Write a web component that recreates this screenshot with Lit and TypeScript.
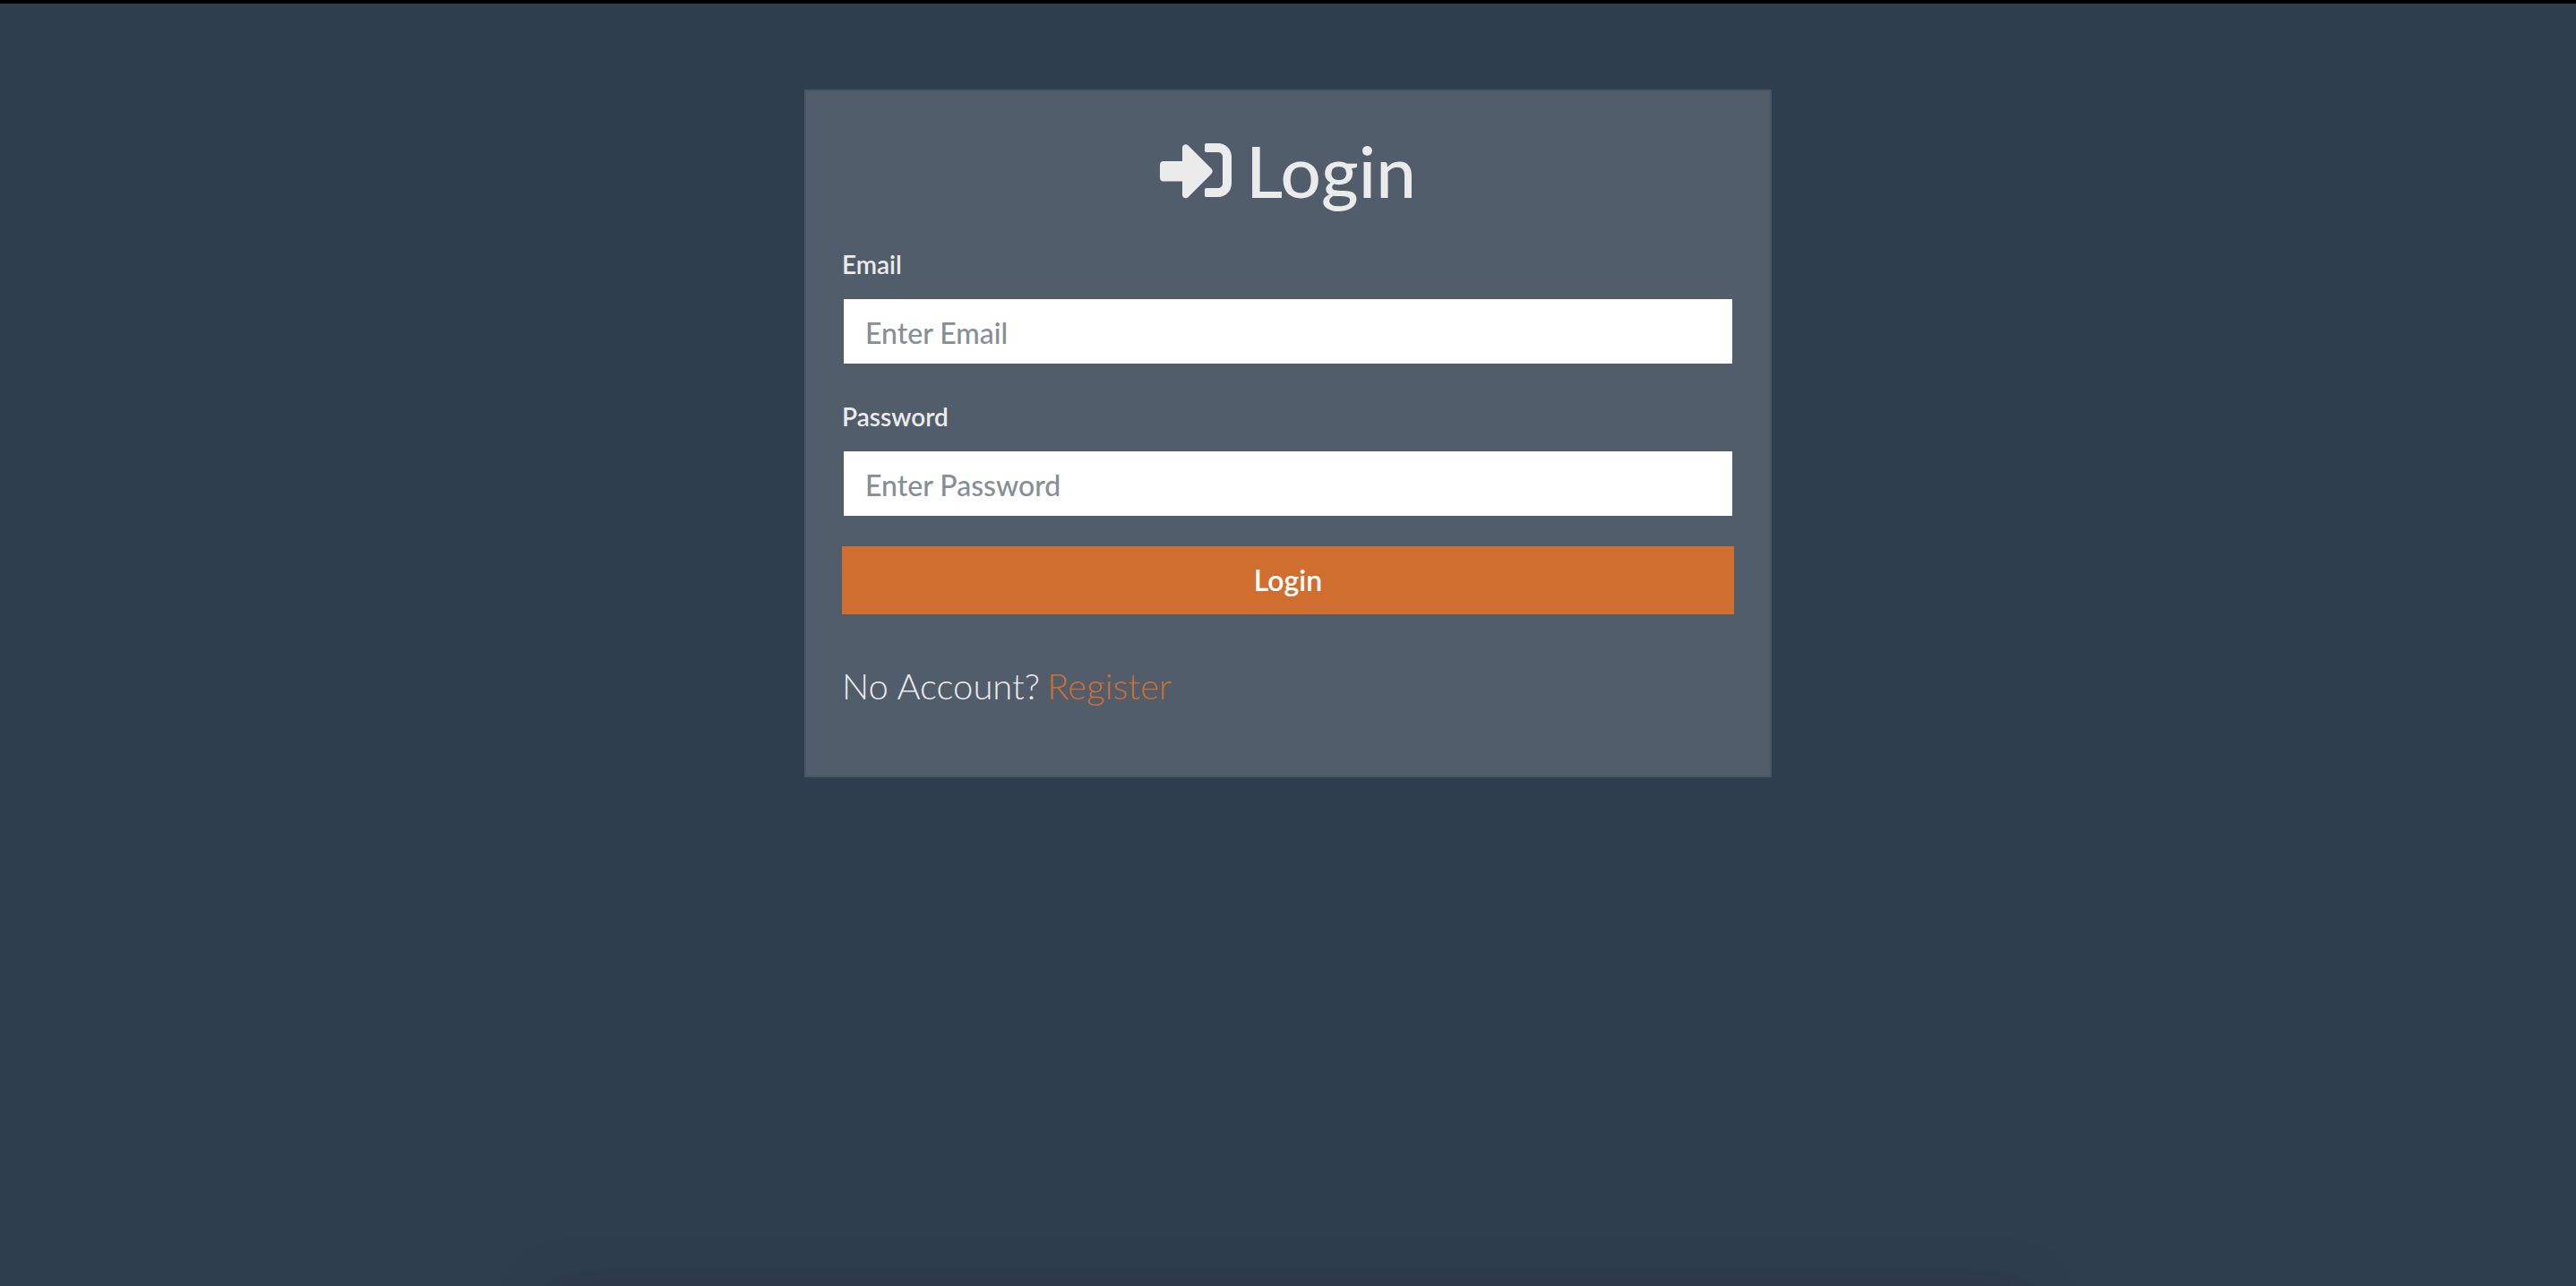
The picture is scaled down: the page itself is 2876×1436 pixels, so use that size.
import { LitElement, html, css } from "lit";
import { customElement } from "lit/decorators.js";

@customElement("app-root")
export class AppRoot extends LitElement {
  static styles = css`
    :host {
      display: block;
      font-family: Lato, "Liberation Sans", sans-serif;
      font-size: 32px;
      line-height: 48px;
      color: #ebebeb;
    }
    *, *::before, *::after {
      box-sizing: border-box;
    }
    .page {
      position: relative;
      overflow: hidden;
      min-height: 100vh;
      padding: 96px 32px;
      background: #2f3e4e;
      border-top: 4px solid #000;
    }
    .page::after {
      content: "";
      position: absolute;
      top: 100%;
      left: 21%;
      right: 21%;
      height: 80px;
      box-shadow: 0 0 60px rgba(0, 0, 0, 0.16);
    }
    .card {
      max-width: 1080px;
      margin: 0 auto;
      padding: 40px;
      background: #515d6b;
      border: 2px solid #495563;
    }
    .title {
      display: flex;
      justify-content: center;
      align-items: center;
      gap: 16px;
      margin: 0 0 32px;
      font-size: 80px;
      font-weight: 500;
      line-height: 96px;
    }
    .icon {
      width: 80px;
      height: 80px;
      fill: currentColor;
    }
    .group {
      display: flex;
      flex-direction: column;
      gap: 16px;
      margin-bottom: 32px;
    }
    .label {
      padding-top: 4px;
      font-size: 28px;
      font-weight: 600;
      line-height: 42px;
    }
    .field {
      width: 100%;
      height: 76px;
      padding: 14px 24px 12px;
      font: inherit;
      font-weight: 500;
      color: #495057;
      background: #fff;
      background-clip: padding-box;
      border: 2px solid transparent;
      border-radius: 0;
      outline: none;
    }
    .field::placeholder {
      color: #868e96;
      opacity: 1;
    }
    .submit {
      display: block;
      width: 100%;
      height: 76px;
      padding: 12px 24px;
      font: inherit;
      font-weight: 600;
      color: #fff;
      background: #d06e30;
      border: 2px solid #d06e30;
      cursor: pointer;
    }
    .lead {
      display: flex;
      flex-wrap: wrap;
      column-gap: 8px;
      margin: 50px 0 30px;
      font-size: 40px;
      font-weight: 300;
      line-height: 60px;
    }
    .link {
      color: #d06e30;
      text-decoration: none;
    }
  `;

  render() {
    return html`
      <main class="page">
        <section class="card">
          <h1 class="title">
            <svg class="icon" viewBox="0 0 512 512" aria-hidden="true">
              <path
                d="M416 448h-84c-6.600 0-12-5.400-12-12v-40c0-6.600 5.400-12 12-12h84c17.700 0 32-14.300 32-32V160c0-17.700-14.300-32-32-32h-84c-6.600 0-12-5.400-12-12V76c0-6.600 5.400-12 12-12h84c53 0 96 43 96 96v192c0 53-43 96-96 96zm-47-201L201 79c-15-15-41-4.500-41 17v96H24c-13.300 0-24 10.700-24 24v96c0 13.300 10.700 24 24 24h136v96c0 21.500 26 32 41 17l168-168c9.300-9.400 9.300-24.600 0-34z"
              />
            </svg>
            Login
          </h1>
          <form @submit=${(e: Event) => e.preventDefault()}>
            <div class="group">
              <label class="label" for="email">Email</label>
              <input class="field" id="email" name="email" type="email" placeholder="Enter Email" />
            </div>
            <div class="group">
              <label class="label" for="password">Password</label>
              <input class="field" id="password" name="password" type="password" placeholder="Enter Password" />
            </div>
            <button class="submit" type="submit">Login</button>
          </form>
          <p class="lead">
            <span>No Account?</span>
            <a class="link" href="/register">Register</a>
          </p>
        </section>
      </main>
    `;
  }
}
